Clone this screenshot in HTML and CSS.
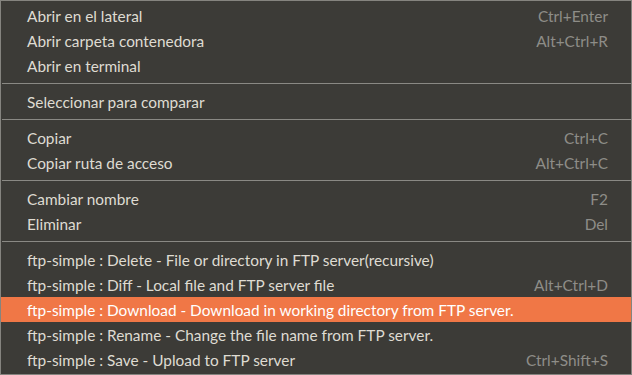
FILE: index.html
```html
<!DOCTYPE html>
<html lang="es">
<head>
    <meta charset="UTF-8">
    <meta name="viewport" content="width=device-width, initial-scale=1.0">
    <title>Menu contextual</title>
    <link rel="stylesheet" href="styles.css">
</head>
<body>
    <div class="menu">
        <div class="menu-item"><span class="label">Abrir en el lateral</span><span class="accel">Ctrl+Enter</span></div>
        <div class="menu-item"><span class="label">Abrir carpeta contenedora</span><span class="accel">Alt+Ctrl+R</span></div>
        <div class="menu-item"><span class="label">Abrir en terminal</span></div>
        <div class="separator"></div>
        <div class="menu-item"><span class="label">Seleccionar para comparar</span></div>
        <div class="separator"></div>
        <div class="menu-item"><span class="label">Copiar</span><span class="accel">Ctrl+C</span></div>
        <div class="menu-item"><span class="label">Copiar ruta de acceso</span><span class="accel">Alt+Ctrl+C</span></div>
        <div class="separator"></div>
        <div class="menu-item"><span class="label">Cambiar nombre</span><span class="accel">F2</span></div>
        <div class="menu-item"><span class="label">Eliminar</span><span class="accel">Del</span></div>
        <div class="separator"></div>
        <div class="menu-item"><span class="label">ftp-simple : Delete - File or directory in FTP server(recursive)</span></div>
        <div class="menu-item"><span class="label">ftp-simple : Diff - Local file and FTP server file</span><span class="accel">Alt+Ctrl+D</span></div>
        <div class="menu-item active"><span class="label">ftp-simple : Download - Download in working directory from FTP server.</span></div>
        <div class="menu-item"><span class="label">ftp-simple : Rename - Change the file name from FTP server.</span></div>
        <div class="menu-item"><span class="label">ftp-simple : Save - Upload to FTP server</span><span class="accel">Ctrl+Shift+S</span></div>
    </div>
</body>
</html>
```

FILE: styles.css
```css
body {
    margin: 0;
    padding: 0;
    background-color: #3c3b37;
    font-family: 'Lato', 'Noto Sans', sans-serif;
}
.menu {
    width: 632px;
    height: 375px;
    box-sizing: border-box;
    border: 1px solid #85847f;
    background-color: #3c3b37;
    padding: 2px 0;
}
.menu-item {
    display: flex;
    justify-content: space-between;
    align-items: center;
    height: 25px;
    padding: 0 23px 0 26px;
    font-size: 15.4px;
    color: #dfdbd2;
}
.menu-item.active {
    background-color: #f07746;
    color: #ffffff;
}
.accel {
    color: #8e8d88;
}
.separator {
    height: 1px;
    margin: 5px 0 5px 1px;
    background-color: #8a8984;
}
```
